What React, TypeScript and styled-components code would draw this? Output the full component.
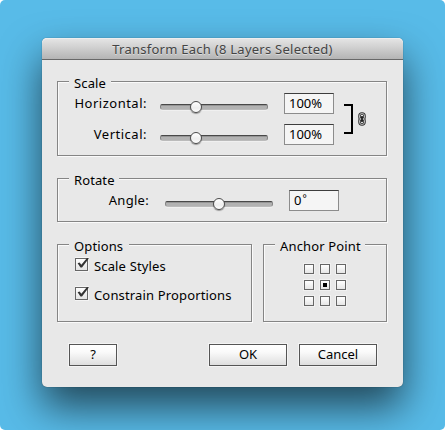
import React from "react";
import styled, { createGlobalStyle } from "styled-components";

const GlobalStyle = createGlobalStyle`
  html, body { margin: 0; background: #fff; }
  *, *::before, *::after { box-sizing: border-box; }
`;

const Desktop = styled.main`
  width: 445px;
  height: 430px;
  padding: 38px 42px 0 42px;
  border-radius: 5px;
  background: #58bbe8;
  overflow: hidden;
  font: 13px/18px "Noto Sans", "Open Sans", sans-serif;
  color: #000;
`;

const Window = styled.section`
  height: 349px;
  border-radius: 5px;
  background: #e8e8e8;
  box-shadow: 0 0 1px rgba(0, 0, 0, 0.6), 0 20px 40px 0 rgba(0, 0, 0, 0.62);
`;

const TitleBar = styled.header`
  height: 22px;
  display: flex;
  justify-content: center;
  border-bottom: 1px solid #686868;
  border-radius: 5px 5px 0 0;
  background: linear-gradient(#e6e6e6, #d0d0d0 45%, #b4b4b4);
  box-shadow: inset 0 1px 0 #eeeeee;
  color: #444;
  line-height: 22px;
  text-shadow: 0 1px 0 rgba(255, 255, 255, 0.45);
`;

const Content = styled.div`
  display: flex;
  flex-direction: column;
  padding: 21px 16px 0 15px;
`;

const Text = styled.span<{ $track?: number }>`
  white-space: pre;
  letter-spacing: ${({ $track = 0 }) => $track}px;
`;

const Group = styled.section<{ $height: number }>`
  height: ${({ $height }) => $height}px;
  border: 1px solid #858585;
  box-shadow: 1px 1px 0 #fafafa, inset 1px 1px 0 #fafafa;
`;

const Legend = styled.div<{ $width: number }>`
  width: ${({ $width }) => $width}px;
  height: 18px;
  margin: -8px 0 0 11px;
  padding-left: 5px;
  background: #e8e8e8;
`;

const ScaleBody = styled.div`
  display: flex;
  padding: 1px 0 0 16px;
`;

const Rows = styled.div`
  display: grid;
  grid-auto-rows: 21px;
  row-gap: 10px;
`;

const Row = styled.div<{ $labelWidth: number }>`
  display: grid;
  grid-template-columns: ${({ $labelWidth }) => $labelWidth}px 108px 50px;
  column-gap: 16px;
  align-items: start;
`;

const RowLabel = styled.div<{ $gap: number }>`
  display: flex;
  justify-content: flex-end;
  padding: 1px ${({ $gap }) => $gap}px 0 0;
  margin: 0 -3px 0 -4px;
`;

const SliderBox = styled.div`
  padding-top: 11px;
`;

const Track = styled.div`
  height: 6px;
  border: 1px solid #858585;
  border-top: 1px solid #484848;
  border-bottom-color: #bbb;
  border-radius: 2px 2px 3px 3px;
  background: linear-gradient(#858585, #b2b2b2 35%, #b2b2b2);
  box-shadow: 0 1px 0 #f0f0f0;
`;

const Thumb = styled.div<{ $offset: number }>`
  width: 12px;
  height: 12px;
  margin: -9px 0 0 ${({ $offset }) => $offset}px;
  border: 1px solid #4c4c4c;
  border-radius: 50%;
  background: linear-gradient(#fff, #eee 60%, #fff);
  box-shadow: 0 1px 1px rgba(0, 0, 0, 0.35);
`;

const Field = styled.div`
  width: 50px;
  height: 21px;
  padding-left: 4px;
  border: 1px solid #8c8c8c;
  border-top-color: #3d3d3d;
  background: #f5f5f5;
  display: flex;
  line-height: 18px;
`;

const Degree = styled.span`
  margin: -1px 0 0 1px;
  font-size: 10px;
  line-height: 16px;
`;

const LinkIcon = styled.svg`
  margin: 11px 0 0 10px;
`;

const RotateBody = styled.div`
  padding: 1px 0 0 16px;
`;

const Columns = styled.div`
  display: grid;
  grid-template-columns: 195px 124px;
  column-gap: 11px;
`;

const Options = styled.div`
  display: grid;
  row-gap: 11px;
  padding: 2px 0 0 17px;
`;

const Option = styled.label`
  height: 18px;
  display: flex;
  gap: 4px;
`;

const CheckIcon = styled.svg`
  flex: none;
  margin-top: -1px;
`;

const AnchorGrid = styled.div`
  display: grid;
  grid-template-columns: repeat(3, 10px);
  grid-auto-rows: 10px;
  gap: 6px;
  padding: 9px 0 0 40px;
`;

const Anchor = styled.div`
  border: 1px solid #666;
  background: linear-gradient(#fff, #e6e6e6);
  box-shadow: 0 0 0 1px #f1f1f1;
  display: grid;
  place-items: center;
`;

const Dot = styled.div`
  width: 4px;
  height: 4px;
  background: #000;
`;

const Spacer = styled.div<{ $size: number }>`
  height: ${({ $size }) => $size}px;
`;

const ActionBar = styled.footer`
  display: flex;
  padding-left: 12px;
`;

const Button = styled.button<{ $push?: number; $width: number }>`
  width: ${({ $width }) => $width}px;
  height: 22px;
  margin: 0 0 0 ${({ $push = 0 }) => $push}px;
  padding: 0 0 2px;
  border: 1px solid #555;
  background: linear-gradient(#fff, #fafafa 35%, #dedede);
  box-shadow: 0 0 0 1px #f4f4f4;
  font: inherit;
  line-height: 18px;
  color: #000;
`;

const Slider = ({ offset }: { offset: number }) => (
  <SliderBox>
    <Track />
    <Thumb $offset={offset} />
  </SliderBox>
);

const Check = () => (
  <CheckIcon width="15" height="18" viewBox="0 0 15 18">
    <defs>
      <linearGradient id="box" x1="0" y1="0" x2="0" y2="1">
        <stop offset="0" stopColor="#fff" />
        <stop offset="1" stopColor="#e2e2e2" />
      </linearGradient>
    </defs>
    <rect x="-0.5" y="1.5" width="14" height="14" fill="none" stroke="#f4f4f4" />
    <rect x="0.5" y="2.5" width="12" height="12" fill="url(#box)" stroke="#666" />
    <path d="M2.6 7.2 4.6 6.5 6.3 8.8 12 2 14 2.2 7 11.6H5.5Z" fill="#333" />
  </CheckIcon>
);

export default function App() {
  return (
    <>
      <GlobalStyle />
      <Desktop>
        <Window>
          <TitleBar>
            <Text $track={0.26}>Transform Each (8 Layers Selected)</Text>
          </TitleBar>
          <Content>
            <Group $height={75}>
              <Legend $width={42}><Text $track={0.15}>Scale</Text></Legend>
              <ScaleBody>
                <Rows>
                  <Row $labelWidth={70}>
                    <RowLabel $gap={0}><Text $track={0.5}>Horizontal:</Text></RowLabel>
                    <Slider offset={30} />
                    <Field><Text>100%</Text></Field>
                  </Row>
                  <Row $labelWidth={70}>
                    <RowLabel $gap={0}><Text $track={0.5}>Vertical:</Text></RowLabel>
                    <Slider offset={30} />
                    <Field><Text>100%</Text></Field>
                  </Row>
                </Rows>
                <LinkIcon width="23" height="31" viewBox="0 0 23 31">
                  <path d="M0 1H8V29H0" fill="none" stroke="#000" strokeWidth="2" />
                  <g fill="none">
                    <rect x="15.5" y="9.5" width="5" height="6" rx="2.4" stroke="#333" strokeWidth="2.6" />
                    <rect x="15.5" y="14.5" width="5" height="6" rx="2.4" stroke="#333" strokeWidth="2.6" />
                    <rect x="15.5" y="9.5" width="5" height="6" rx="2.4" stroke="#ccc" strokeWidth="0.9" />
                    <rect x="15.5" y="14.5" width="5" height="6" rx="2.4" stroke="#ccc" strokeWidth="0.9" />
                    <path d="M18 12V18" stroke="#111" strokeWidth="1.6" />
                  </g>
                </LinkIcon>
              </ScaleBody>
            </Group>
            <Spacer $size={22} />
            <Group $height={44}>
              <Legend $width={50}><Text $track={0.1}>Rotate</Text></Legend>
              <RotateBody>
                <Row $labelWidth={75}>
                  <RowLabel $gap={3}><Text $track={0.3}>Angle:</Text></RowLabel>
                  <Slider offset={48} />
                  <Field><Text>0</Text><Degree>°</Degree></Field>
                </Row>
              </RotateBody>
            </Group>
            <Spacer $size={22} />
            <Columns>
              <Group $height={78}>
                <Legend $width={60}><Text $track={0.12}>Options</Text></Legend>
                <Options>
                  <Option><Check /><Text $track={0.15}>Scale Styles</Text></Option>
                  <Option><Check /><Text $track={0.15}>Constrain Proportions</Text></Option>
                </Options>
              </Group>
              <Group $height={78}>
                <Legend $width={90}><Text $track={0.15}>Anchor Point</Text></Legend>
                <AnchorGrid>
                  {Array.from({ length: 9 }, (_, i) => (
                    <Anchor key={i}>{i === 4 && <Dot />}</Anchor>
                  ))}
                </AnchorGrid>
              </Group>
            </Columns>
            <Spacer $size={22} />
            <ActionBar>
              <Button $width={48}>?</Button>
              <Button $width={78} $push={92}>OK</Button>
              <Button $width={78} $push={12}>Cancel</Button>
            </ActionBar>
          </Content>
        </Window>
      </Desktop>
    </>
  );
}
